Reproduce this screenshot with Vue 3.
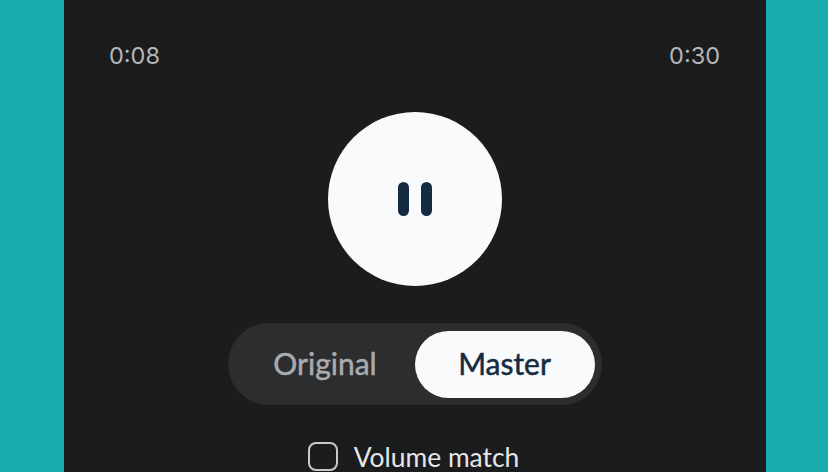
<script setup>
const elapsed = '0:08'
const total = '0:30'
</script>

<template>
  <div class="page">
    <main class="panel">
      <div class="times">
        <span>{{ elapsed }}</span>
        <span>{{ total }}</span>
      </div>
      <button class="play" aria-label="Pause">
        <svg width="36" height="36" viewBox="0 0 36 36" aria-hidden="true">
          <rect x="1" y="1" width="11" height="34" rx="5.5" fill="#142b42" />
          <rect x="24" y="1" width="11" height="34" rx="5.5" fill="#142b42" />
        </svg>
      </button>
      <div class="toggle">
        <div class="opt">Original</div>
        <div class="opt active">Master</div>
      </div>
      <label class="check">
        <span class="box"></span>
        <span>Volume match</span>
      </label>
    </main>
  </div>
</template>

<style>
html, body { margin: 0; overflow: hidden; background: #1aabad; }
</style>

<style scoped>
.page {
  width: 828px;
  height: 472px;
  overflow: hidden;
  background: #1aabad;
  padding-left: 64px;
  box-sizing: border-box;
}
.panel {
  width: 702px;
  height: 472px;
  box-sizing: border-box;
  background: #1b1c1e;
  padding: 42px 46px 0 45px;
  display: flex;
  flex-direction: column;
  align-items: center;
  font-family: Lato, "Liberation Sans", sans-serif;
}
.times {
  align-self: stretch;
  display: flex;
  justify-content: space-between;
  font-family: Inter, "Liberation Sans", sans-serif;
  font-size: 23.5px;
  line-height: 28px;
  color: #b4b6b9;
}
.play {
  margin-top: 42px;
  width: 174px;
  height: 174px;
  border: 0;
  padding: 0;
  border-radius: 50%;
  background: #f9fafc;
  display: flex;
  align-items: center;
  justify-content: center;
}
.toggle {
  margin-top: 37px;
  width: 374px;
  height: 82px;
  box-sizing: border-box;
  padding: 8px 7px 7px 8px;
  border-radius: 41px;
  background: #2c2d2f;
  display: grid;
  grid-template-columns: 179px 180px;
  font-size: 30px;
  -webkit-text-stroke: 0.5px currentColor;
}
.opt {
  display: flex;
  align-items: center;
  justify-content: center;
  color: #a9abae;
  border-radius: 34px;
  padding-bottom: 4px;
  box-sizing: border-box;
}
.active {
  background: #f9fafc;
  color: #142b42;
}
.check {
  margin-top: 36px;
  margin-left: -2px;
  display: flex;
  align-items: center;
  gap: 16px;
  font-size: 26.4px;
  line-height: 30px;
  color: #e6e7e9;
}
.check span:last-child {
  position: relative;
  top: 1px;
}
.box {
  width: 30px;
  height: 29px;
  border: 2px solid #c9cacc;
  border-radius: 8px;
  box-sizing: border-box;
}
</style>
